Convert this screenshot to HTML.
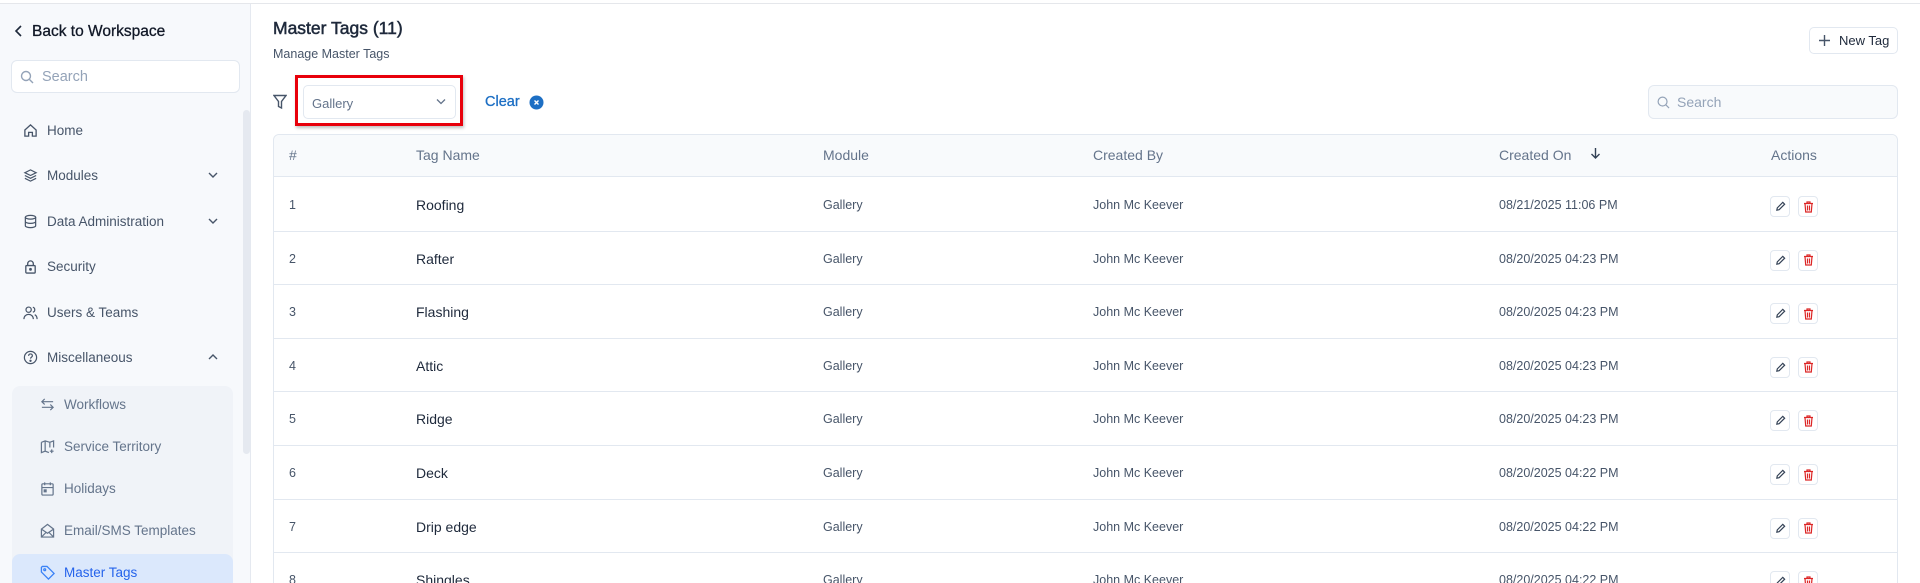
<!DOCTYPE html>
<html><head><meta charset="utf-8"><style>
*{box-sizing:border-box;margin:0;padding:0}
html,body{width:1920px;height:583px;overflow:hidden}
body{background:#fff;font-family:"Liberation Sans",sans-serif;position:relative;color:#1e293b}
.abs{position:absolute}
.topline{left:0;top:3px;width:1920px;height:1px;background:#e5e7eb}
.side{left:0;top:4px;width:251px;height:579px;background:#f7f9fc;border-right:1px solid #e5e9f0}
.mi{position:absolute;left:23px;font-size:13.5px;color:#475569;display:flex;align-items:center;gap:9px;height:20px;transform:translateY(-10px)}
.mi svg{width:15px;height:15px}
.chev{position:absolute;left:207px;width:12px;height:12px;transform:translateY(-6px)}
.sub{position:absolute;left:40px;font-size:13.5px;color:#64748b;display:flex;align-items:center;gap:9px;height:20px;transform:translateY(-10px)}
.sub svg{width:15px;height:15px}
.th{position:absolute;top:155px;font-size:14px;color:#64748b;transform:translateY(-8px)}
.cell{position:absolute;font-size:12.5px;color:#475569;transform:translateY(-8px)}
.name{font-size:14px;color:#1e293b}
.rl{position:absolute;left:274px;width:1623px;height:1px;background:#e2e8f0}
.btn{position:absolute;width:20px;height:21px;border:1px solid #e2e8f0;border-radius:4px;background:#fff;display:flex;align-items:center;justify-content:center}
</style></head><body>
<div class="abs topline"></div>
<div class="abs side"></div>
<div class="abs" style="left:243px;top:110px;width:7px;height:344px;background:#e5e9f0;border-radius:4px"></div>
<svg class="abs" style="left:14px;top:25px" width="10" height="12" viewBox="0 0 10 12"><path d="M7 1L2 6l5 5" fill="none" stroke="#1e293b" stroke-width="1.6"/></svg>
<div class="abs" style="left:32px;top:23px;font-size:15.5px;color:#111827;-webkit-text-stroke:0.3px #111827">Back to Workspace</div>
<div class="abs" style="left:11px;top:60px;width:229px;height:33px;background:#fff;border:1px solid #e2e8f0;border-radius:6px"></div>
<svg class="abs" style="left:20px;top:70px" width="14" height="14" viewBox="0 0 14 14"><circle cx="6" cy="6" r="4.5" fill="none" stroke="#94a3b8" stroke-width="1.4"/><path d="M9.5 9.5L13 13" stroke="#94a3b8" stroke-width="1.4"/></svg>
<div class="abs" style="left:42px;top:69px;font-size:14.5px;color:#94a3b8">Search</div>

<div class="mi" style="top:130px"><svg viewBox="0 0 16 16" fill="none" stroke="#475569" stroke-width="1.4"><path d="M2 7.5L8 2l6 5.5V14H10V10H6v4H2z"/></svg>Home</div>
<div class="mi" style="top:175px"><svg viewBox="0 0 16 16" fill="none" stroke="#475569" stroke-width="1.3"><path d="M8 2l6 3-6 3-6-3z M2 8l6 3 6-3 M2 11l6 3 6-3"/></svg>Modules</div>
<svg class="chev" style="top:175px" viewBox="0 0 12 12"><path d="M2 4l4 4 4-4" fill="none" stroke="#475569" stroke-width="1.4"/></svg>
<div class="mi" style="top:221px"><svg viewBox="0 0 16 16" fill="none" stroke="#475569" stroke-width="1.3"><ellipse cx="8" cy="3.5" rx="5.5" ry="2"/><path d="M2.5 3.5v9c0 1.1 2.5 2 5.5 2s5.5-.9 5.5-2v-9M2.5 8c0 1.1 2.5 2 5.5 2s5.5-.9 5.5-2"/></svg>Data Administration</div>
<svg class="chev" style="top:221px" viewBox="0 0 12 12"><path d="M2 4l4 4 4-4" fill="none" stroke="#475569" stroke-width="1.4"/></svg>
<div class="mi" style="top:266px"><svg viewBox="0 0 16 16" fill="none" stroke="#475569" stroke-width="1.4"><rect x="3" y="7" width="10" height="8" rx="1"/><path d="M5 7V5a3 3 0 016 0v2"/><circle cx="8" cy="11" r=".8" fill="#475569"/></svg>Security</div>
<div class="mi" style="top:312px"><svg viewBox="0 0 16 16" fill="none" stroke="#475569" stroke-width="1.3"><circle cx="6" cy="5" r="2.8"/><path d="M1 15c0-3 2.2-5 5-5s5 2 5 5M10.5 2.3a2.8 2.8 0 010 5.4M12.5 10.3c1.5.7 2.5 2.4 2.5 4.7"/></svg>Users &amp; Teams</div>
<div class="mi" style="top:357px"><svg viewBox="0 0 16 16" fill="none" stroke="#475569" stroke-width="1.3"><circle cx="8" cy="8" r="6.5"/><path d="M6 6.2a2 2 0 114 0c0 1.3-2 1.5-2 3"/><circle cx="8" cy="11.5" r=".6" fill="#475569"/></svg>Miscellaneous</div>
<svg class="chev" style="top:357px" viewBox="0 0 12 12"><path d="M2 8l4-4 4 4" fill="none" stroke="#475569" stroke-width="1.4"/></svg>

<div class="abs" style="left:12px;top:386px;width:221px;height:200px;background:#f0f3f8;border-radius:8px"></div>
<div class="abs" style="left:12px;top:554px;width:221px;height:40px;background:#dbe8fc;border-radius:8px"></div>
<div class="sub" style="top:404px"><svg viewBox="0 0 16 16" fill="none" stroke="#64748b" stroke-width="1.3"><path d="M14 5H2M5 2L2 5l3 3M2 11h12M11 8l3 3-3 3"/></svg>Workflows</div>
<div class="sub" style="top:446px"><svg viewBox="0 0 16 16" fill="none" stroke="#64748b" stroke-width="1.3"><path d="M1.5 3.5l4-1.5 5 1.5 4-1.5v7M1.5 3.5v11l4-1.5 4 1.5M5.5 2v11M10.5 3.5V9M12.5 11v4M10.5 13h4"/></svg>Service Territory</div>
<div class="sub" style="top:488px"><svg viewBox="0 0 16 16" fill="none" stroke="#64748b" stroke-width="1.3"><rect x="2" y="3" width="12" height="12" rx="1"/><path d="M2 7h12M5 1.5v3M11 1.5v3"/><rect x="4.5" y="9.5" width="2" height="2" fill="#64748b"/></svg>Holidays</div>
<div class="sub" style="top:530px"><svg viewBox="0 0 16 16" fill="none" stroke="#64748b" stroke-width="1.3"><path d="M1.5 6.5L8 1.5l6.5 5V15h-13z M1.5 6.5L8 11l6.5-4.5 M1.5 15L6.5 10 M14.5 15L9.5 10"/></svg>Email/SMS Templates</div>
<div class="sub" style="top:572px;color:#2563eb"><svg viewBox="0 0 16 16" fill="none" stroke="#3b82f6" stroke-width="1.4"><path d="M1.5 2.5v5l7.5 7.5 6-6L7.5 1.5h-5z"/><circle cx="5" cy="5" r="1"/></svg>Master Tags</div>

<!-- main -->
<div class="abs" style="left:273px;top:18px;font-size:17.5px;color:#1e293b;-webkit-text-stroke:0.5px #1e293b">Master Tags (11)</div>
<div class="abs" style="left:273px;top:47px;font-size:12.5px;color:#475569">Manage Master Tags</div>
<div class="abs" style="left:1809px;top:27px;width:89px;height:27px;border:1px solid #e2e8f0;border-radius:5px;background:#fff;font-size:13px;color:#1e293b;display:flex;align-items:center;padding-left:9px;gap:9px"><svg width="11" height="11" viewBox="0 0 11 11"><path d="M5.5 0v11M0 5.5h11" stroke="#475569" stroke-width="1.4"/></svg>New Tag</div>

<svg class="abs" style="left:273px;top:94px" width="14" height="16" viewBox="0 0 14 16"><path d="M1 1.5h12L8.5 7.5V14L5.5 12.5V7.5z" fill="none" stroke="#475569" stroke-width="1.4"/></svg>
<div class="abs" style="left:295px;top:75px;width:168px;height:51px;border:3px solid #e8000b;box-shadow:1px 2px 3px rgba(0,0,0,.25)"></div>
<div class="abs" style="left:303px;top:85px;width:153px;height:34px;border:1px solid #e2e8f0;border-radius:5px;background:#fff;font-size:13px;color:#64748b;padding:10px 0 0 8px">Gallery</div>
<svg class="abs" style="left:436px;top:98px" width="10" height="7" viewBox="0 0 10 7"><path d="M1 1.5l4 4 4-4" fill="none" stroke="#64748b" stroke-width="1.3"/></svg>
<div class="abs" style="left:485px;top:94px;font-size:14.5px;color:#1d6fc4;-webkit-text-stroke:0.3px #1d6fc4">Clear</div>
<svg class="abs" style="left:529px;top:95px" width="15" height="15" viewBox="0 0 15 15"><circle cx="7.5" cy="7.5" r="7" fill="#1d6fc4"/><path d="M5.5 5.5l4 4M9.5 5.5l-4 4" stroke="#fff" stroke-width="1.4"/></svg>

<div class="abs" style="left:1648px;top:85px;width:250px;height:34px;border:1px solid #e2e8f0;border-radius:6px;background:#f8fafc"></div>
<svg class="abs" style="left:1657px;top:96px" width="13" height="13" viewBox="0 0 14 14"><circle cx="6" cy="6" r="4.8" fill="none" stroke="#94a3b8" stroke-width="1.3"/><path d="M9.5 9.5L13 13" stroke="#94a3b8" stroke-width="1.3"/></svg>
<div class="abs" style="left:1677px;top:94px;font-size:14px;color:#94a3b8">Search</div>

<div class="abs" style="left:273px;top:134px;width:1625px;height:470px;border:1px solid #e2e8f0;border-radius:6px"></div>
<div class="abs" style="left:274px;top:135px;width:1623px;height:42px;background:#f8fafc;border-radius:6px 6px 0 0;border-bottom:1px solid #e2e8f0"></div>
<div class="th" style="left:289px">#</div>
<div class="th" style="left:416px">Tag Name</div>
<div class="th" style="left:823px">Module</div>
<div class="th" style="left:1093px">Created By</div>
<div class="th" style="left:1499px">Created On</div>
<svg class="abs" style="left:1590px;top:147px" width="11" height="12" viewBox="0 0 11 12"><path d="M5.5 1v10M1.5 7l4 4 4-4" fill="none" stroke="#334155" stroke-width="1.4"/></svg>
<div class="th" style="left:1771px">Actions</div>

<div id="rows"></div>
<script>
var d=[["1","Roofing","08/21/2025 11:06 PM"],["2","Rafter","08/20/2025 04:23 PM"],["3","Flashing","08/20/2025 04:23 PM"],["4","Attic","08/20/2025 04:23 PM"],["5","Ridge","08/20/2025 04:23 PM"],["6","Deck","08/20/2025 04:22 PM"],["7","Drip edge","08/20/2025 04:22 PM"],["8","Shingles","08/20/2025 04:22 PM"]];
var h="";
d.forEach(function(r,i){var c=206+i*53.6;var b=177+(i+1)*53.6;
h+='<div class="cell" style="left:289px;top:'+c+'px">'+r[0]+'</div>';
h+='<div class="cell name" style="left:416px;top:'+(c-1)+'px">'+r[1]+'</div>';
h+='<div class="cell" style="left:823px;top:'+c+'px">Gallery</div>';
h+='<div class="cell" style="left:1093px;top:'+c+'px">John Mc Keever</div>';
h+='<div class="cell" style="left:1499px;top:'+c+'px">'+r[2]+'</div>';
h+='<div class="btn" style="left:1770px;top:'+(c-10)+'px"><svg width="11" height="11" viewBox="0 0 12 12"><path d="M2 10l.5-2.5 6-6 2 2-6 6z" fill="none" stroke="#334155" stroke-width="1.3"/></svg></div>';
h+='<div class="btn" style="left:1798px;top:'+(c-10)+'px"><svg width="11" height="12" viewBox="0 0 11 12"><path d="M1 2.5h9M4 2.5V1h3v1.5M2 2.5l.7 8.5h5.6L9 2.5M4.5 4.5v5M6.5 4.5v5" fill="none" stroke="#dc2626" stroke-width="1.2"/></svg></div>';
if(i<7)h+='<div class="rl" style="top:'+b+'px"></div>';});
document.getElementById("rows").innerHTML=h;
</script>
</body></html>
